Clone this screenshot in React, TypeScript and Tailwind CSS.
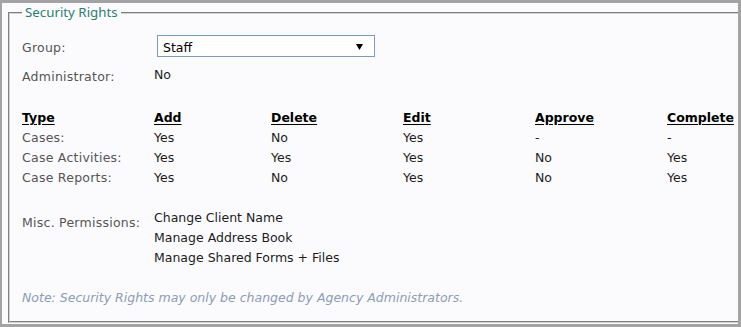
import React from "react";

const COLS = "grid grid-cols-[132px_117px_132px_132px_132px_auto]";

const HEADERS = ["Type", "Add", "Delete", "Edit", "Approve", "Complete"];

const ROWS: string[][] = [
  ["Cases:", "Yes", "No", "Yes", "-", "-"],
  ["Case Activities:", "Yes", "Yes", "Yes", "No", "Yes"],
  ["Case Reports:", "Yes", "No", "Yes", "No", "Yes"],
];

const MISC = ["Change Client Name", "Manage Address Book", "Manage Shared Forms + Files"];

const label = "text-[#555555] tracking-[0.25px]";
const value = "text-[#1b1b1b]";

export default function App() {
  return (
    <div className="w-[741px] h-[327px] bg-[#a3a3a3] pt-[3px] pl-[2px] pr-[3px] pb-[3px] font-['DejaVu_Sans',Verdana,sans-serif] text-[12.5px]">
      <div className="h-full bg-[#fbfbfe] overflow-hidden pl-[6px] pt-[9px]">
        <div className="relative w-[760px] h-[311px] border-t border-l border-b border-t-[#7f7f7f] border-l-[#7f7f7f] border-b-[#d2d2d2]">
          <div className="h-full border-t border-l border-b border-t-[#d2d2d2] border-l-[#d2d2d2] border-b-[#7f7f7f] pl-[12px] pt-[21px]">
            <span className="absolute left-[13px] -top-[9px] bg-[#fbfbfe] px-[3px] leading-[17px] text-[13.3px] text-[#2b7f6f] font-['Noto_Sans',sans-serif]">
              Security Rights
            </span>

            <div className="flex items-center h-[22px]">
              <span className={`w-[135px] pt-[4px] ${label}`}>Group:</span>
              <div className="w-[218px] h-[22px] border border-[#7a9cc0] bg-white flex items-center justify-between pl-[5px] pr-[11px]">
                <span className="text-black pt-[4px]">Staff</span>
                <svg width="7" height="6" viewBox="0 0 7 6" className="mt-[1px]">
                  <path d="M0 0 H7 L3.5 6 Z" fill="#000" />
                </svg>
              </div>
            </div>

            <div className="flex h-[22px] mt-[8px] leading-[20px]">
              <span className={`w-[132px] mt-[2px] ${label}`}>Administrator:</span>
              <span className={value}>No</span>
            </div>

            <div className={`${COLS} mt-[21px] leading-[20px]`}>
              {HEADERS.map((h) => (
                <span key={h} className="font-bold text-black underline underline-offset-[2px]">
                  {h}
                </span>
              ))}
              {ROWS.map((row) =>
                row.map((c, i) => (
                  <span key={row[0] + i} className={i === 0 ? label : value}>
                    {c}
                  </span>
                ))
              )}
            </div>

            <div className="flex mt-[20px] leading-[20px]">
              <span className={`w-[132px] pt-[5px] ${label}`}>Misc. Permissions:</span>
              <div className="flex flex-col">
                {MISC.map((m) => (
                  <span key={m} className={value}>
                    {m}
                  </span>
                ))}
              </div>
            </div>

            <p className="mt-[20px] leading-[20px] italic text-[#8d9db5]">
              Note: Security Rights may only be changed by Agency Administrators.
            </p>
          </div>
        </div>
      </div>
    </div>
  );
}
